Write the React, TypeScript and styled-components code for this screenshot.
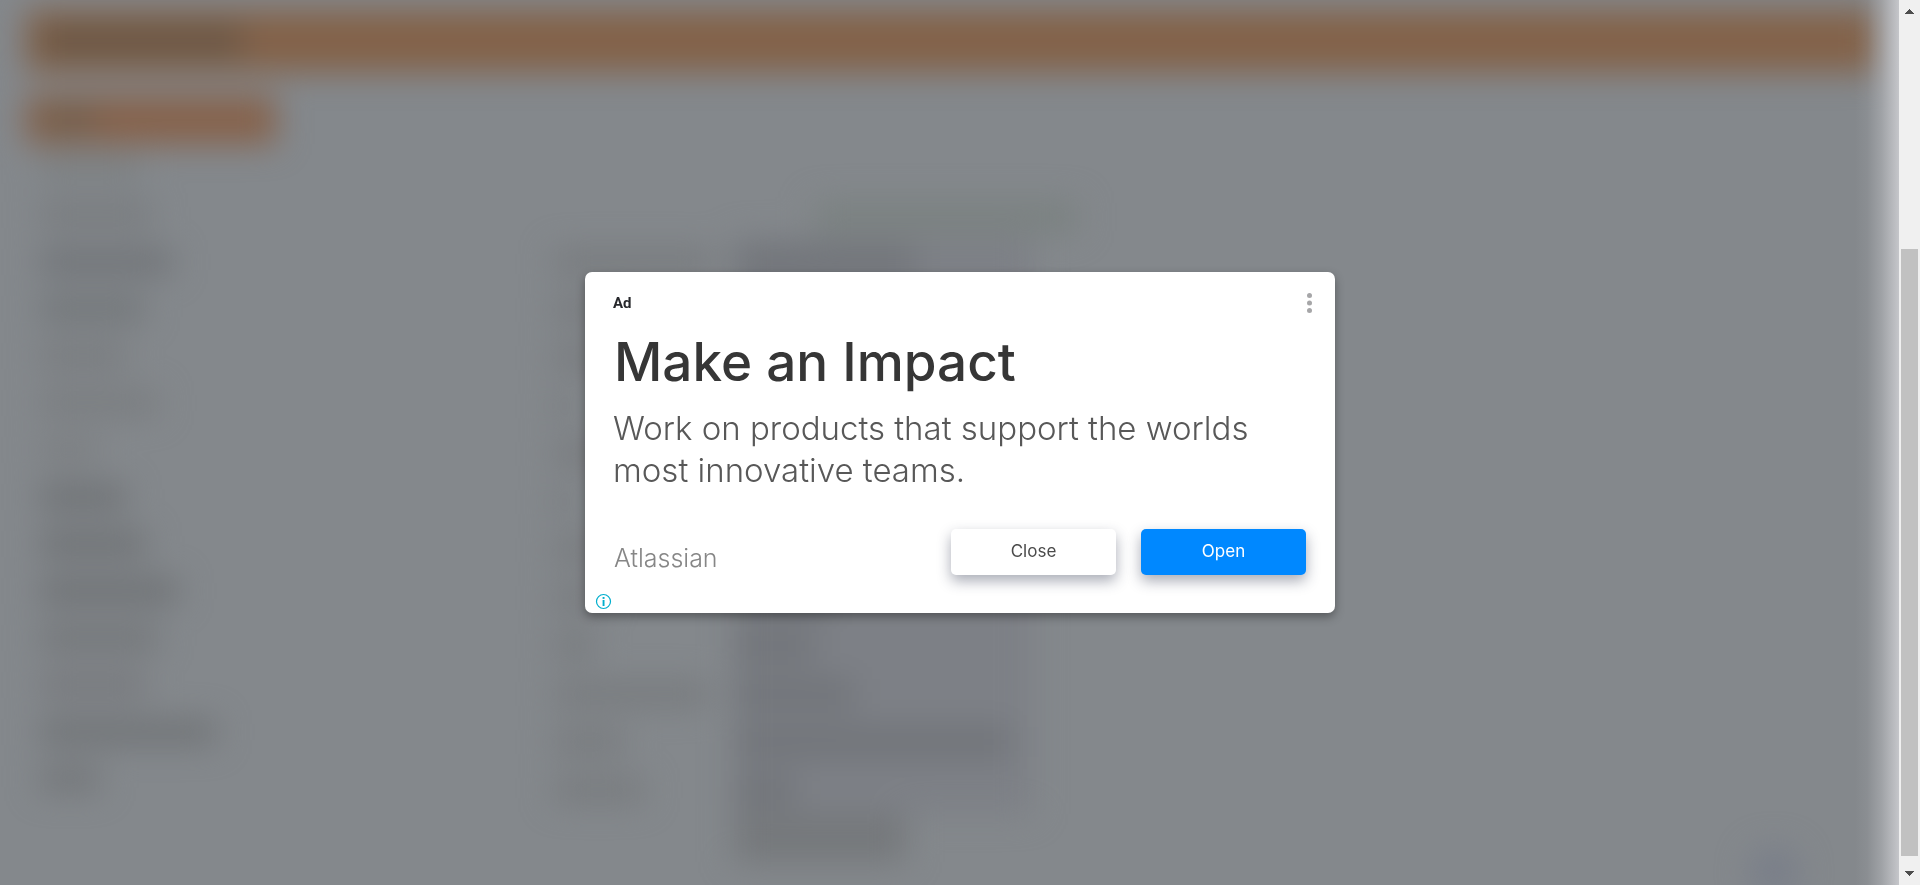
import React from 'react';
import styled, { createGlobalStyle } from 'styled-components';

const GlobalStyle = createGlobalStyle`
  * { box-sizing: border-box; }
  body { margin: 0; overflow: hidden; background: #84888c; font-family: Inter, "Liberation Sans", sans-serif; }
`;

const Screen = styled.div`
  display: flex;
  height: 100vh;
`;

const Viewport = styled.div`
  position: relative;
  flex: 1;
  min-width: 0;
  overflow: hidden;
  background: #84888c;
`;

const BlurredPage = styled.div`
  display: flex;
  flex-direction: column;
  gap: 24px;
  padding: 10px 22px 0 26px;
  filter: blur(16px);
`;

const TopBar = styled.div`
  display: flex;
  align-items: center;
  height: 62px;
  padding-left: 16px;
  background: #836249;
`;

const Columns = styled.div`
  display: flex;
  align-items: flex-start;
`;

const SideNav = styled.div`
  width: 250px;
  margin-right: 278px;
`;

const NavHeader = styled.div`
  display: flex;
  align-items: center;
  height: 48px;
  padding-left: 16px;
  background: #86624b;
`;

const Line = styled.div<{ $width: number; $height?: number; $color?: string }>`
  width: ${(p) => p.$width}px;
  height: ${(p) => p.$height ?? 24}px;
  background: ${(p) => p.$color ?? '#75787c'};
`;

const NavItem = styled.div`
  display: flex;
  align-items: center;
  height: 47px;
  padding-left: 14px;
`;

const Form = styled.div`
  display: flex;
  flex-direction: column;
  padding-top: 106px;
`;

const FormTitle = styled.div`
  display: flex;
  padding-left: 260px;
  height: 36px;
`;

const FormRow = styled.div`
  display: flex;
  align-items: center;
  height: 48px;
`;

const LabelCell = styled.div`
  width: 180px;
`;

const FieldCell = styled.div`
  display: flex;
  align-items: center;
  width: 298px;
  height: 48px;
  background: #7d8086;
`;

const EdgeGlow = styled.div`
  position: absolute;
  top: 0;
  right: 0;
  bottom: 0;
  width: 44px;
  background: linear-gradient(
    to right,
    rgba(197, 198, 202, 0) 0%,
    rgba(197, 198, 202, 0.1) 28%,
    rgba(197, 198, 202, 0.42) 60%,
    rgba(197, 198, 202, 1) 100%
  );
`;

const HelpDot = styled.div`
  position: absolute;
  right: 100px;
  bottom: -12px;
  width: 50px;
  height: 50px;
  border-radius: 50%;
  background: #797e89;
  filter: blur(16px);
`;

const Scrollbar = styled.div`
  display: flex;
  flex-direction: column;
  width: 21px;
  padding: 0 2px;
  background: #f0f0f0;
`;

const ScrollButton = styled.button`
  display: flex;
  align-items: center;
  justify-content: center;
  width: 17px;
  height: 23px;
  padding: 0;
  border: 0;
  background: transparent;
`;

const ScrollTrack = styled.div`
  display: grid;
  flex: 1;
  grid-template-rows: 226fr 607fr 6fr;
`;

const ScrollThumb = styled.div`
  grid-row: 2;
  background: #c1c1c1;
`;

const Overlay = styled.div`
  position: fixed;
  inset: 0;
  display: flex;
  align-items: center;
  justify-content: center;
`;

const Card = styled.section`
  display: flex;
  flex-direction: column;
  width: 750px;
  padding: 21px 28px 3px;
  border-radius: 7px;
  background: #fff;
  box-shadow: 0 4px 10px rgba(0, 0, 0, 0.34);
`;

const CardHeader = styled.header`
  display: flex;
  align-items: center;
  justify-content: space-between;
  height: 20px;
  margin-right: -5px;
`;

const AdLabel = styled.span`
  font: 700 15px/20px Roboto, "Liberation Sans", sans-serif;
  color: #27282c;
`;

const MenuButton = styled.button`
  display: flex;
  justify-content: center;
  width: 5px;
  height: 20px;
  padding: 0;
  border: 0;
  background: transparent;
`;

const Title = styled.h1`
  margin: 16px 0 0;
  padding-left: 1px;
  font-size: 53px;
  font-weight: 500;
  line-height: 66px;
  color: #363636;
`;

const Description = styled.p`
  margin: 12px 0 0;
  font-size: 33px;
  font-weight: 300;
  line-height: 42px;
  color: #585858;
`;

const CardFooter = styled.footer`
  display: flex;
  gap: 25px;
  margin-top: 38px;
  padding: 0 1px;
`;

const Advertiser = styled.span`
  margin-right: auto;
  padding-top: 14px;
  font-size: 25px;
  font-weight: 300;
  line-height: 30px;
  color: #868686;
`;

const ActionButton = styled.button<{ $primary?: boolean }>`
  width: 165px;
  height: 46px;
  padding: 0 0 2px;
  border: 0;
  border-radius: 5px;
  background: ${(p) => (p.$primary ? '#0088ff' : '#fff')};
  color: ${(p) => (p.$primary ? '#fff' : '#4a4a4a')};
  font-family: inherit;
  font-size: 17px;
  font-weight: 400;
  box-shadow: 0 6px 14px rgba(40, 48, 72, 0.4);
`;

const InfoLink = styled.a`
  display: flex;
  align-self: flex-start;
  margin: 18px 0 0 -18px;
`;

const navLines = [100, 112, 132, 104, 86, 118, 58, 86, 106, 138, 118, 106, 176, 60];
const navShades = [
  '#7c8082', '#787b7e', '#6f7276', '#717578', '#787b7e', '#797c7f', '#7b7e81',
  '#6d7073', '#6d7073', '#6d7073', '#727578', '#76787c', '#6f7275', '#727578',
];

const formRows = [
  { label: 160, value: 180 },
  { label: 60, value: 100 },
  { label: 60, value: 140 },
  { label: 20, value: 140 },
  { label: 60, value: 140 },
  { label: 20, value: 120 },
  { label: 50, value: 120 },
  { label: 50, value: 100 },
  { label: 40, value: 80 },
  { label: 155, value: 120 },
  { label: 70, value: 276 },
  { label: 90, value: 60 },
];

export default function App() {
  return (
    <>
      <GlobalStyle />
      <Screen>
        <Viewport>
          <BlurredPage aria-hidden="true">
            <TopBar>
              <Line $width={200} $height={30} $color="#695645" />
            </TopBar>
            <Columns>
              <SideNav>
                <NavHeader>
                  <Line $width={54} $height={26} $color="#735f4c" />
                </NavHeader>
                {navLines.map((width, i) => (
                  <NavItem key={i}>
                    <Line $width={width} $color={navShades[i]} />
                  </NavItem>
                ))}
              </SideNav>
              <Form>
                <FormTitle>
                  <Line $width={264} $height={30} $color="#7a8180" />
                </FormTitle>
                {formRows.map((row, i) => (
                  <FormRow key={i}>
                    <LabelCell>
                      <Line $width={row.label} $color="#777a7d" />
                    </LabelCell>
                    <FieldCell>
                      <Line $width={row.value} $height={32} $color="#717479" />
                    </FieldCell>
                  </FormRow>
                ))}
                <FormRow>
                  <LabelCell />
                  <Line $width={172} $height={48} $color="#75787b" />
                </FormRow>
              </Form>
            </Columns>
          </BlurredPage>
          <HelpDot />
          <EdgeGlow />
        </Viewport>
        <Scrollbar>
          <ScrollButton aria-label="Scroll up">
            <svg width="9" height="5" viewBox="0 0 9 5" shapeRendering="crispEdges">
              <path d="M4 0h1v1h1v1h1v1h1v1h1v1H0V4h1V3h1V2h1V1h1z" fill="#4d4d4d" />
            </svg>
          </ScrollButton>
          <ScrollTrack>
            <ScrollThumb />
          </ScrollTrack>
          <ScrollButton aria-label="Scroll down">
            <svg width="9" height="5" viewBox="0 0 9 5" shapeRendering="crispEdges">
              <path d="M4 5h1V4h1V3h1V2h1V1h1V0H0v1h1v1h1v1h1v1h1z" fill="#4d4d4d" />
            </svg>
          </ScrollButton>
        </Scrollbar>
      </Screen>
      <Overlay>
        <Card role="dialog" aria-labelledby="ad-title">
          <CardHeader>
            <AdLabel>Ad</AdLabel>
            <MenuButton aria-label="Ad options">
              <svg width="5" height="20" viewBox="0 0 5 20" fill="#a6a6a8">
                <circle cx="2.5" cy="2.5" r="2.5" />
                <circle cx="2.5" cy="10" r="2.5" />
                <circle cx="2.5" cy="17.5" r="2.5" />
              </svg>
            </MenuButton>
          </CardHeader>
          <Title id="ad-title">Make an Impact</Title>
          <Description>Work on products that support the worlds most innovative teams.</Description>
          <CardFooter>
            <Advertiser>Atlassian</Advertiser>
            <ActionButton type="button">Close</ActionButton>
            <ActionButton type="button" $primary>
              Open
            </ActionButton>
          </CardFooter>
          <InfoLink href="#" aria-label="About this ad">
            <svg width="17" height="17" viewBox="0 0 17 17">
              <circle cx="8.5" cy="8.5" r="7" fill="none" stroke="#00aecd" strokeWidth="1.2" />
              <rect x="7.6" y="4" width="1.9" height="1.9" fill="#00aecd" />
              <rect x="7.6" y="7" width="1.9" height="6" fill="#00aecd" />
            </svg>
          </InfoLink>
        </Card>
      </Overlay>
    </>
  );
}
